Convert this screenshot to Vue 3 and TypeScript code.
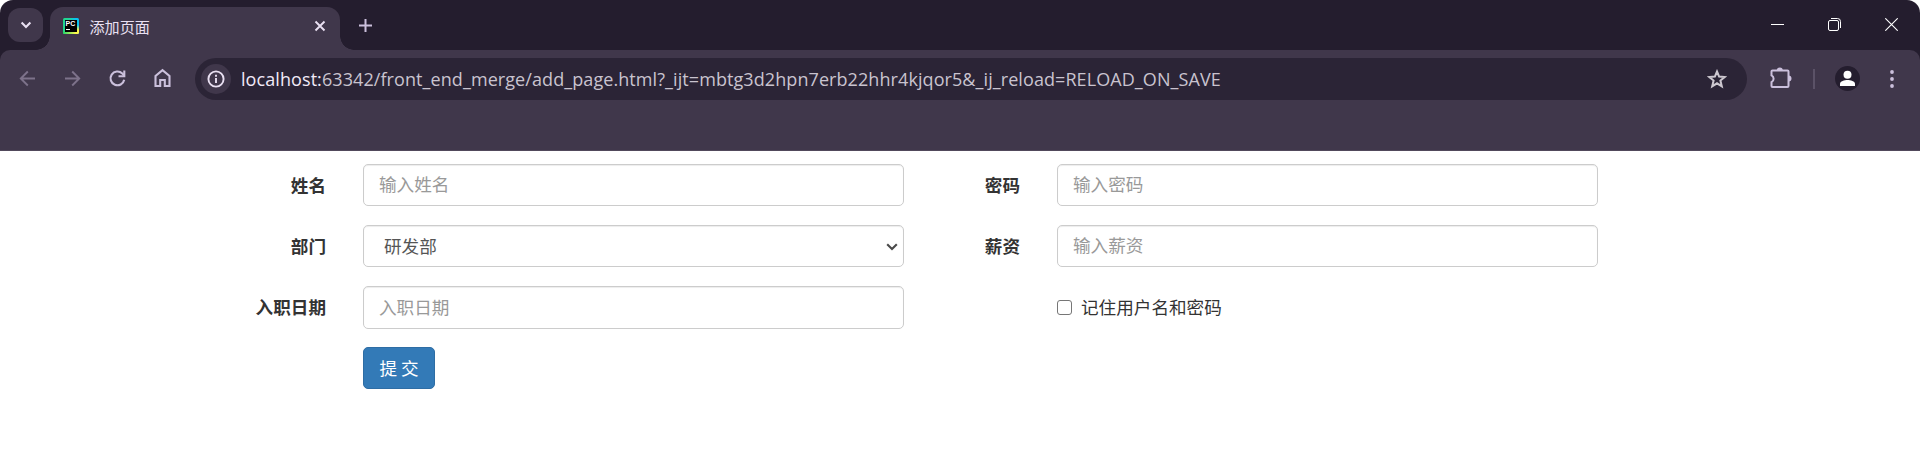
<script setup lang="ts">
import { ref } from 'vue'

interface Field {
  label: string
  kind: 'input' | 'select' | 'check'
  text: string
}

const rows: Field[][] = [
  [
    { label: '姓名', kind: 'input', text: '输入姓名' },
    { label: '密码', kind: 'input', text: '输入密码' },
  ],
  [
    { label: '部门', kind: 'select', text: '研发部' },
    { label: '薪资', kind: 'input', text: '输入薪资' },
  ],
  [
    { label: '入职日期', kind: 'input', text: '入职日期' },
    { label: '', kind: 'check', text: '记住用户名和密码' },
  ],
]

const remember = ref(false)
const host = 'localhost:'
const path = '63342/front_end_merge/add_page.html?_ijt=mbtg3d2hpn7erb22hhr4kjqor5&_ij_reload=RELOAD_ON_SAVE'
</script>

<template>
  <div class="window">
    <header class="chrome">
      <div class="tabstrip">
        <button class="tab-search" aria-label="tabs">
          <svg width="12" height="12" viewBox="0 0 12 12"><path d="M1.6 3.6 6 8l4.4-4.4" fill="none" stroke="#e9e0f2" stroke-width="2.1" /></svg>
        </button>
        <div class="tab">
          <svg class="favicon" width="16" height="16" viewBox="0 0 16 16">
            <defs>
              <linearGradient id="favTop" x1="0" x2="1">
                <stop offset="0" stop-color="#21d789" />
                <stop offset="0.45" stop-color="#1fd3a0" />
                <stop offset="0.75" stop-color="#07c3f2" />
                <stop offset="1" stop-color="#07c3f2" />
              </linearGradient>
              <linearGradient id="favRight" x1="0" y1="0" x2="0" y2="1">
                <stop offset="0.4" stop-color="#07c3f2" />
                <stop offset="0.85" stop-color="#fcf84a" />
              </linearGradient>
              <linearGradient id="favBottom" x1="0" x2="1">
                <stop offset="0" stop-color="#21d769" />
                <stop offset="0.8" stop-color="#fcf84a" />
              </linearGradient>
            </defs>
            <rect width="16" height="16" rx="1.5" fill="url(#favTop)" />
            <path d="M13 2h3v12h-3z" fill="url(#favRight)" />
            <path d="M0 13.500h16v1a1.500 1.500 0 0 1-1.500 1.500h-13a1.500 1.500 0 0 1-1.500-1.500z" fill="url(#favBottom)" />
            <rect x="2" y="2" width="12" height="12" fill="#000" />
            <text x="2.600" y="8.400" class="fav-text">PC</text>
            <path d="M3 11.500h4" stroke="#fff" stroke-width="1" />
          </svg>
          <span class="tab-title">添加页面</span>
          <svg class="tab-close" width="12" height="12" viewBox="0 0 12 12"><path d="M1.500 1.500l9 9M10.500 1.500l-9 9" stroke="#e9e0f2" stroke-width="1.900" /></svg>
        </div>
        <svg class="plus" width="13" height="13" viewBox="0 0 13 13"><path d="M6.500 0v13M0 6.500h13" stroke="#cbc0dc" stroke-width="2" /></svg>
        <div class="controls">
          <svg width="13" height="13" viewBox="0 0 13 13"><path d="M0 6.500h13" stroke="#fff" /></svg>
          <svg width="13" height="13" viewBox="0 0 13 13">
            <rect x="0.500" y="2.500" width="10" height="10" rx="1.500" fill="none" stroke="#fff" />
            <path d="M3 .5h6.500a3 3 0 0 1 3 3V10" fill="none" stroke="#fff" />
          </svg>
          <svg width="13" height="13" viewBox="0 0 13 13"><path d="M.3.3l12.400 12.400M12.700.3L.3 12.700" stroke="#fff" stroke-width="1.100" /></svg>
        </div>
      </div>

      <div class="toolbar">
        <nav class="nav">
          <span><svg width="21" height="21" viewBox="0 0 21 21"><path d="M18 10.500H4M10.800 3.500l-7 7 7 7" fill="none" stroke="#7d728a" stroke-width="1.900" /></svg></span>
          <span><svg width="21" height="21" viewBox="0 0 21 21"><path d="M3 10.500h14M10.200 3.500l7 7-7 7" fill="none" stroke="#7d728a" stroke-width="1.900" /></svg></span>
          <span><svg width="21" height="21" viewBox="0 0 21 21"><path d="M17.200 11.700A6.900 6.900 0 1 1 15.300 5.500l1.900 2" fill="none" stroke="#cbc0dc" stroke-width="2.100" /><path d="M17.300 2.500v5.800h-5.800" fill="none" stroke="#cbc0dc" stroke-width="2.100" /></svg></span>
          <span><svg width="21" height="21" viewBox="0 0 21 21"><path d="M3.500 18V7.900l7-5.700 7 5.700V18h-4.700v-6H8.200v6z" fill="none" stroke="#cbc0dc" stroke-width="2.100" /></svg></span>
        </nav>
        <div class="omnibox">
          <span class="info">
            <svg width="18" height="18" viewBox="0 0 18 18"><circle cx="9" cy="9" r="7.600" fill="none" stroke="#e9e0f2" stroke-width="1.900" /><path d="M9 8v5M9 4.800v2" stroke="#e9e0f2" stroke-width="1.900" /></svg>
          </span>
          <span class="url"><b>{{ host }}</b>{{ path }}</span>
          <svg class="star" width="20" height="20" viewBox="0 0 20 20"><path d="M10 2.500l2.100 5.100 5.600.4-4.300 3.600 1.400 5.700L10 14.300l-4.800 3 1.400-5.700L2.300 8l5.600-.4z" fill="none" stroke="#cdc8d0" stroke-width="2" /></svg>
        </div>
        <svg class="puzzle" width="22" height="22" viewBox="0 0 22 22">
          <path d="M2.500 3.500h15a1 1 0 0 1 1 1v14.500a1 1 0 0 1-1 1h-15a1 1 0 0 1-1-1V15.200a3.800 3.800 0 0 0 0-6.800V4.500a1 1 0 0 1 1-1z" fill="none" stroke="#cbc0dc" stroke-width="2" />
          <path d="M6.800 3.500a3 3 0 0 1 6 0zM18.500 8.600a3 3 0 0 1 0 6z" fill="#cbc0dc" />
        </svg>
        <i class="divider"></i>
        <svg class="avatar" width="25" height="25" viewBox="0 0 25 25">
          <circle cx="12.500" cy="12.500" r="12.500" fill="#241d2e" />
          <circle cx="12.500" cy="8.700" r="4" fill="#fff" />
          <path d="M5 20v-2.200c0-2.600 4.500-3.800 7.500-3.800s7.500 1.200 7.500 3.800V20z" fill="#fff" />
        </svg>
        <svg class="dots" width="4" height="20" viewBox="0 0 4 20"><g fill="#cbc0dc"><circle cx="2" cy="3" r="1.900" /><circle cx="2" cy="10" r="1.900" /><circle cx="2" cy="17" r="1.900" /></g></svg>
      </div>
    </header>

    <form class="form" @submit.prevent>
      <div v-for="(row, i) in rows" :key="i" class="row">
        <template v-for="f in row" :key="f.text">
          <span class="label">{{ f.label }}</span>
          <input v-if="f.kind === 'input'" class="control" type="text" :placeholder="f.text" />
          <div v-else-if="f.kind === 'select'" class="control select">
            <span>{{ f.text }}</span>
            <svg width="12" height="8" viewBox="0 0 12 8"><path d="M1.200 1.200 6 6l4.800-4.800" fill="none" stroke="#4a4a4a" stroke-width="2.100" /></svg>
          </div>
          <label v-else class="check">
            <input v-model="remember" type="checkbox" />
            <span>{{ f.text }}</span>
          </label>
        </template>
      </div>
      <div class="row">
        <span></span>
        <button class="submit" type="submit">提 交</button>
      </div>
    </form>
  </div>
</template>

<style>
body {
  background: #fff;
}
</style>

<style scoped>
.window {
  width: 1920px;
  height: 459px;
  overflow: hidden;
  background: #fff;
  font-family: "Open Sans", "Noto Sans CJK SC", sans-serif;
}
.window *,
.window {
  box-sizing: border-box;
}
svg {
  display: block;
  flex: none;
}
.chrome {
  height: 151px;
  background: #241d2e;
  border-radius: 13px 13px 0 0;
}
.tabstrip {
  display: flex;
  align-items: center;
  height: 50px;
  padding-left: 8px;
}
.tab-search {
  display: flex;
  align-items: center;
  justify-content: center;
  width: 35px;
  height: 34px;
  padding: 0;
  border: 0;
  border-radius: 12px;
  background: #40374b;
}
.tab {
  position: relative;
  display: flex;
  align-items: center;
  align-self: flex-end;
  width: 290px;
  height: 43px;
  margin-left: 7px;
  padding: 0 14px 5px 13px;
  border-radius: 13px 13px 0 0;
  background: #40374b;
}
.tab::before,
.tab::after {
  content: "";
  position: absolute;
  bottom: 0;
  width: 14px;
  height: 14px;
}
.tab::before {
  left: -14px;
  background: radial-gradient(circle at 0 0, transparent 13.500px, #40374b 14px);
}
.tab::after {
  right: -14px;
  background: radial-gradient(circle at 100% 0, transparent 13.500px, #40374b 14px);
}
.fav-text {
  font: bold 7px "Liberation Sans", sans-serif;
  fill: #fff;
}
.tab-title {
  flex: 1;
  margin: -1px 0 0 10.500px;
  font-family: "Noto Sans CJK SC", sans-serif;
  font-size: 15.100px;
  line-height: 20px;
  color: #e9e0f2;
}
.plus {
  margin-left: 19px;
}
.controls {
  display: flex;
  gap: 44px;
  margin-left: auto;
  margin-right: 22px;
  margin-top: -1px;
}
.toolbar {
  display: flex;
  align-items: center;
  height: 101px;
  padding: 0 26px 43px 5px;
  border-bottom: 1px solid #51495b;
  border-radius: 10px 10px 0 0;
  background: #40374b;
}
.nav {
  display: flex;
}
.nav span {
  display: flex;
  justify-content: center;
  width: 45px;
}
.omnibox {
  display: flex;
  align-items: center;
  width: 1552px;
  height: 42px;
  margin: 1px 0 0 10px;
  padding: 0 20px 0 6px;
  border-radius: 21px;
  background: #2b2436;
}
.info {
  display: flex;
  align-items: center;
  justify-content: center;
  width: 30px;
  height: 30px;
  border-radius: 50%;
  background: #40374b;
}
.url {
  flex: 1;
  margin: -1px 0 0 10px;
  font-size: 18px;
  line-height: 24px;
  letter-spacing: 0.08px;
  white-space: nowrap;
  color: #c9c3cf;
}
.url b {
  font-weight: 400;
  color: #f1eaf8;
}
.puzzle {
  margin: -1px 0 0 23px;
}
.divider {
  width: 2px;
  height: 20px;
  margin-left: 21px;
  background: #5b5267;
}
.avatar {
  margin-left: 20px;
}
.dots {
  margin-left: 30px;
}
.form {
  display: flex;
  flex-direction: column;
  padding-top: 13px;
  font-size: 17.600px;
  font-family: "Noto Sans CJK SC", sans-serif;
  color: #333;
}
.row {
  display: grid;
  grid-template-columns: 326px 541px 79px 541px;
  column-gap: 37px;
  height: 61px;
  align-items: start;
}
.label {
  font-weight: 700;
  line-height: 41px;
  text-align: right;
}
.control {
  width: 100%;
  height: 42px;
  padding: 0 15px 3px;
  border: 1px solid #ccc;
  border-radius: 5px;
  background: #fff;
  box-shadow: inset 0 1px 1px rgba(0, 0, 0, 0.075);
  font: inherit;
  color: #555;
  outline: none;
}
.row:nth-child(3) .control {
  height: 43px;
}
.control::placeholder {
  color: #999;
  opacity: 1;
}
.select {
  display: flex;
  align-items: center;
  justify-content: space-between;
  padding: 0 5px 2px 20px;
}
.select svg {
  margin-top: 3px;
}
.check {
  display: flex;
  align-items: center;
  height: 42px;
}
.check span {
  margin-top: -2px;
}
.check input {
  appearance: none;
  width: 15px;
  height: 15px;
  margin: 1px 9px 0 0;
  border: 1px solid #767676;
  border-radius: 3px;
  background: #fff;
}
.submit {
  justify-self: start;
  width: 72px;
  height: 42px;
  padding: 0 0 2px;
  border: 1px solid #2e6da4;
  border-radius: 5px;
  background: #337ab7;
  font: inherit;
  color: #fff;
}
</style>
